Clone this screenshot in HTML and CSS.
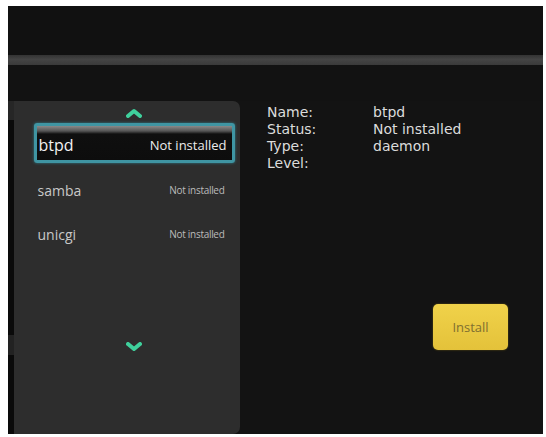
FILE: index.html
```html
<!DOCTYPE html>
<html>
<head>
<meta charset="utf-8">
<link rel="stylesheet" href="styles.css">
</head>
<body>
<div class="screen">
  <div class="top"></div>
  <div class="bar"></div>
  <div class="main">
    <div class="edge"><span class="e1"></span><span class="e2"></span><span class="e3"></span><span class="e4"></span></div>
    <div class="list">
      <svg class="arrow up" width="16" height="10" viewBox="0 0 16 10"><path d="M2 8 L8 3 L14 8" fill="none" stroke="#3fd09c" stroke-width="4" stroke-linecap="round" stroke-linejoin="round"/></svg>
      <div class="row sel"><span class="nm">btpd</span><span class="st">Not installed</span></div>
      <div class="row"><span class="nm">samba</span><span class="st">Not installed</span></div>
      <div class="row"><span class="nm">unicgi</span><span class="st">Not installed</span></div>
      <div class="spacer"></div>
      <svg class="arrow down" width="16" height="10" viewBox="0 0 16 10"><path d="M2 2 L8 7 L14 2" fill="none" stroke="#3fd09c" stroke-width="4" stroke-linecap="round" stroke-linejoin="round"/></svg>
    </div>
    <div class="detail">
      <div class="info">
        <span>Name:</span><span>btpd</span>
        <span>Status:</span><span>Not installed</span>
        <span>Type:</span><span>daemon</span>
        <span>Level:</span><span></span>
      </div>
      <div class="actions"><button class="install">Install</button></div>
    </div>
  </div>
</div>
</body>
</html>
```

FILE: styles.css
```css
html, body {
  margin: 0;
  background: #ffffff;
}
body {
  padding: 6px 3px 3px 8px;
  width: 546px;
  height: 437px;
  box-sizing: border-box;
  overflow: hidden;
  font-family: "Open Sans", "DejaVu Sans", sans-serif;
}
.screen {
  width: 535px;
  height: 428px;
  background: #121212;
  display: flex;
  flex-direction: column;
}
.top {
  height: 49px;
  background: #111111;
}
.bar {
  height: 10px;
  background: linear-gradient(#333 0%, #444 45%, #3a3a3a 100%);
}
.main {
  flex: 1;
  display: flex;
  margin-top: 36px;
  background: #131313;
}
.edge {
  width: 6px;
  display: flex;
  flex-direction: column;
}
.edge .e1 { height: 19px; background: #262626; }
.edge .e2 { height: 215px; background: #0a0a0a; }
.edge .e3 { height: 20px; background: #222; }
.edge .e4 { flex: 1; background: #0a0a0a; }
.list {
  width: 226px;
  background: #2d2d2d;
  border-radius: 0 7px 7px 0;
  display: flex;
  flex-direction: column;
  align-items: center;
  padding: 7px 0 0 14px;
  box-sizing: border-box;
}
.arrow { display: block; }
.up { margin-bottom: 5px; }
.row {
  width: 201px;
  display: flex;
  justify-content: space-between;
  align-items: center;
  height: 44px;
  padding: 0 10px 0 4px;
  box-sizing: border-box;
  color: #c8c8c8;
}
.row .nm { font-size: 14px; }
.row .st { font-size: 10px; color: #bbbbbb; letter-spacing: -0.3px; }
.row.sel {
  height: 40px;
  margin-bottom: 5px;
  border: 3px solid #3f95a3;
  border-radius: 3px;
  box-shadow: 0 0 3px #2f7d8a;
  background: linear-gradient(#8a8a8a 0px, #555 5px, #0f0f0f 8px, #0d0d0d 100%);
  padding: 4px 5px 0 2px;
  color: #f2f2f2;
}
.row.sel .nm { font-size: 16px; }
.row.sel .st { font-size: 13px; color: #ececec; letter-spacing: 0; }
.spacer { height: 86px; }
.detail {
  flex: 1;
  display: flex;
  flex-direction: column;
  padding: 3px 35px 0 27px;
}
.info {
  display: grid;
  grid-template-columns: 106px 1fr;
  font-family: "DejaVu Sans", sans-serif;
  font-size: 14px;
  line-height: 17px;
  color: #dcdcdc;
}
.actions {
  display: flex;
  justify-content: flex-end;
  margin-top: 132px;
}
.install {
  width: 75px;
  height: 46px;
  border: none;
  border-radius: 5px;
  background: linear-gradient(#f0d24a, #e4c23a);
  box-shadow: 0 0 2px #6a5a10;
  color: #7f6f30;
  font-family: "Open Sans", sans-serif;
  font-size: 13px;
  padding: 0;
}
```
